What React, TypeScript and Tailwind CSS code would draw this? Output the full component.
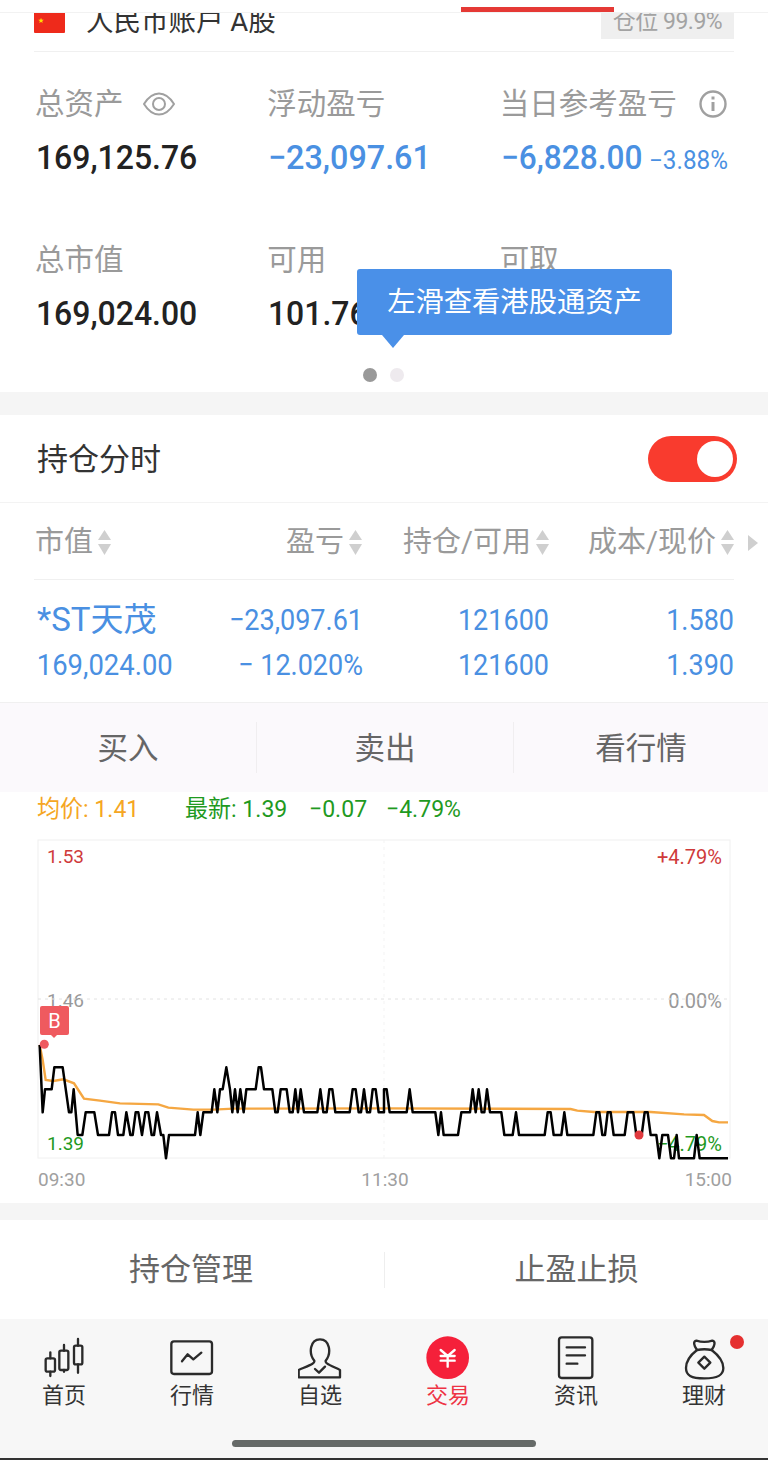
import React, { FC } from "react";

const font = { fontFamily: 'Roboto, "Noto Sans CJK SC", sans-serif' };

// chart points are measured at 3x, [x, y] pairs split by half of the page
const priceLeft = [119,195,128,397,135,328,155,328,163,262,188,262,207,397,214,397,221,328,233,465,247,465,257,397,283,397,294,465,327,465,336,397,345,397,354,465,370,465,379,397,391,465,398,465,407,397,415,397,426,465,436,397,445,397,455,465,462,465,471,397,483,465,490,465,498,535,507,465,585,465,593,397,601,465,610,397,635,397,643,328,652,397,660,328,668,328,679,262,690,328,697,397,705,328,713,397,721,328,731,397,739,328,767,328,776,262,783,262,792,328,817,328,826,397,833,397,842,328,860,328,869,397,878,397,886,328,894,397,902,328,912,397,952,397,961,328,970,397,980,397,988,328,997,328,1006,397,1049,397,1058,328,1067,328,1076,397,1083,397,1092,328,1101,397,1110,397,1118,328,1127,328,1136,397,1152,397];
const priceRight = [0,328,8,328,17,397,68,397,77,328,86,397,154,397,163,465,171,397,179,465,222,465,232,397,258,397,266,328,275,397,284,328,293,397,301,397,309,328,318,397,352,397,361,465,386,465,396,397,405,465,482,465,491,397,500,397,509,465,532,465,541,397,550,465,628,465,637,397,646,397,655,465,663,465,671,397,680,397,689,465,722,465,731,397,748,397,757,465,773,465,782,397,791,397,800,465,817,465,826,535,835,465,852,465,861,535,870,535,878,465,885,535,930,535,938,465,947,535,1032,535];
const avgLeft = [119,195,128,240,137,300,160,303,190,298,222,310,235,330,252,356,300,362,360,370,475,373,505,383,580,389,640,389,700,386,1152,385];
const avgRight = [0,385,560,387,580,392,630,396,800,396,900,403,960,405,985,423,1005,427,1032,427];

const toPoints = (left: number[], right: number[]) => {
  const out: string[] = [];
  for (let i = 0; i < left.length; i += 2) out.push(`${left[i] / 3},${980 + left[i + 1] / 3}`);
  for (let i = 0; i < right.length; i += 2) out.push(`${384 + right[i] / 3},${980 + right[i + 1] / 3}`);
  return out.join(" ");
};

const Stat: FC<{ label: string; children: React.ReactNode; icon?: React.ReactNode }> = ({ label, children, icon }) => (
  <div>
    <div className="flex h-[40px] items-center whitespace-nowrap text-[29.5px] text-[#9a9a9a]">
      {label}
      {icon}
    </div>
    <div className="mt-[8px] flex h-[40px] items-baseline whitespace-nowrap">{children}</div>
  </div>
);

const SortIcon = () => (
  <svg viewBox="0 0 15 26" className="ml-[4px] h-[26px] w-[15px] shrink-0" fill="#cfcfcf">
    <path d="M7.5 0 L14 10 H1 Z" />
    <path d="M7.5 25 L14 14 H1 Z" />
  </svg>
);

const HeadCell: FC<{ label: string; left?: boolean }> = ({ label, left }) => (
  <div className={left ? "flex items-center" : "flex items-center justify-end"}>
    {label}
    <SortIcon />
  </div>
);

const Tab: FC<{ label: string; red?: boolean; view: string; children: React.ReactNode }> = ({ label, red, view, children }) => (
  <div className="flex w-[128px] flex-col items-center">
    <svg viewBox={view} className="h-[44px] w-[44px]" fill="none" stroke="#2b2b2b" strokeWidth="7" strokeLinejoin="round" strokeLinecap="round">
      {children}
    </svg>
    <span className={red ? "mt-[3px] text-[22px] leading-[26px] text-[#ee3344]" : "mt-[3px] text-[22px] leading-[26px] text-[#333]"}>{label}</span>
  </div>
);

export default function App() {
  return (
    <div className="relative h-[1460px] w-[768px] overflow-hidden bg-white" style={font}>
      {/* top strip */}
      <div className="h-[13px] border-b border-[#f2f2f2] bg-white pl-[461px] pt-[7px]">
        <div className="h-[5px] w-[153px] bg-[#e53935]" />
      </div>

      <div className="mx-[34px] flex h-[39px] items-start justify-between overflow-hidden border-b border-[#f0f0f0]">
        <div className="flex items-start">
          <div className="flex h-[20px] w-[31px] items-start rounded-b-[1px] bg-[#ee2a1b] pl-[4px] pt-[3px] text-[6px] leading-[8px] text-[#ffde00]">★</div>
          <div className="-mt-[12px] ml-[21px] whitespace-nowrap text-[27.5px] leading-[42px] text-[#333]">人民币账户 A股</div>
        </div>
        <div className="flex h-[26px] w-[133px] items-start justify-center overflow-hidden bg-[#efefef] text-[23px] leading-[18px] tracking-[-0.5px] text-[#a3a3a3]">仓位 99.9%</div>
      </div>

      {/* assets */}
      <div className="relative h-[340px]">
        <div className="grid grid-cols-3 gap-y-[68px] pl-[35px] pr-[36px] pt-[32px]">
          <Stat
            label="总资产"
            icon={
              <svg viewBox="0 0 32 24" className="ml-[19px] h-[24px] w-[32px]" fill="none" stroke="#a0a0a0" strokeWidth="2">
                <path d="M1 12 C6 4 11 1.5 16 1.5 C21 1.5 26 4 31 12 C26 20 21 22.5 16 22.5 C11 22.5 6 20 1 12 Z" />
                <circle cx="16" cy="12" r="6" />
              </svg>
            }
          >
            <span className="inline-block origin-left scale-x-[.94] pl-[1px] text-[34px] font-medium text-[#222]">169,125.76</span>
          </Stat>
          <Stat label="浮动盈亏">
            <span className="inline-block origin-left scale-x-[.95] pl-[1px] text-[34px] font-medium text-[#4a90e2]">−23,097.61</span>
          </Stat>
          <Stat
            label="当日参考盈亏"
            icon={
              <svg viewBox="0 0 28 28" className="ml-[22px] h-[28px] w-[28px] shrink-0" fill="none" stroke="#a0a0a0" strokeWidth="2.4">
                <circle cx="14" cy="14" r="12.5" />
                <path d="M14 12 V21" strokeWidth="3" />
                <path d="M14 6.5 V9.5" strokeWidth="3" />
              </svg>
            }
          >
            <span className="inline-block w-[149px] origin-left scale-x-[.93] pl-[1px] text-[34px] font-medium text-[#4a90e2]">−6,828.00</span>
            <span className="inline-block origin-left scale-x-[.97] text-[25px] text-[#4a90e2]">−3.88%</span>
          </Stat>
          <Stat label="总市值">
            <span className="inline-block origin-left scale-x-[.94] pl-[1px] text-[34px] font-medium text-[#222]">169,024.00</span>
          </Stat>
          <Stat label="可用">
            <span className="inline-block origin-left scale-x-[.94] pl-[1px] text-[34px] font-medium text-[#222]">101.76</span>
          </Stat>
          <Stat label="可取">
            <span className="inline-block origin-left scale-x-[.94] pl-[1px] text-[34px] font-medium text-[#222]">0.00</span>
          </Stat>
        </div>

        <div className="absolute bottom-[10px] left-[363px] flex gap-[13px]">
          <div className="h-[14px] w-[14px] rounded-full bg-[#999]" />
          <div className="h-[14px] w-[14px] rounded-full bg-[#eeeaee]" />
        </div>

        {/* tooltip */}
        <div className="absolute left-[357px] top-[217px] flex h-[66px] w-[315px] items-center justify-center rounded-[3px] bg-[#4a90e8] pt-[3px] text-[28.3px] text-white">
          左滑查看港股通资产
          <div className="absolute left-[25px] top-[66px] h-0 w-0 border-x-[11px] border-t-[13px] border-x-transparent border-t-[#4a90e8]" />
        </div>
      </div>

      <div className="h-[23px] bg-[#f5f5f5]" />

      {/* toggle row */}
      <div className="flex h-[88px] items-center justify-between border-b border-[#f3f3f3] pl-[37px] pr-[31px]">
        <span className="pt-[4px] text-[31px] text-[#333]">持仓分时</span>
        <div className="flex h-[46px] w-[89px] items-center justify-end rounded-full bg-[#f93b2e] pr-[4px]">
          <div className="h-[36px] w-[36px] rounded-full bg-white" />
        </div>
      </div>

      {/* holdings table */}
      <div className="flex h-[76px] items-center pl-[35px] pt-[4px] text-[29px] text-[#9a9a9a]">
        <div className="grid w-[700px] grid-cols-[187px_141px_187px_185px]">
          <HeadCell label="市值" left />
          <HeadCell label="盈亏" />
          <HeadCell label="持仓/可用" />
          <HeadCell label="成本/现价" />
        </div>
        <svg viewBox="0 0 10 16" className="ml-[13px] h-[16px] w-[10px]" fill="#cfcfcf">
          <path d="M0 0 L10 8 L0 16 Z" />
        </svg>
      </div>
      <div className="mx-[34px] border-t border-[#f0f0f0]">
        <div className="grid h-[122px] grid-cols-[148px_181px_186px_185px] content-center gap-y-[5px] pt-[2px] text-[30px] leading-[40px] text-[#4a90e2]">
          <div className="whitespace-nowrap pl-[3px] text-[33px]">*ST天茂</div>
          <div className="origin-right scale-x-[.9] whitespace-nowrap text-right">−23,097.61</div>
          <div className="origin-right scale-x-[.9] text-right">121600</div>
          <div className="origin-right scale-x-[.9] text-right">1.580</div>
          <div className="origin-left scale-x-[.915] whitespace-nowrap pl-[3px]">169,024.00</div>
          <div className="origin-right scale-x-[.9] whitespace-nowrap text-right">− 12.020%</div>
          <div className="origin-right scale-x-[.9] text-right">121600</div>
          <div className="origin-right scale-x-[.9] text-right">1.390</div>
        </div>
      </div>

      {/* actions */}
      <div className="flex h-[90px] items-center border-t border-[#f0f0f0] bg-[#fbf9fc] text-[30.5px] text-[#666]">
        <div className="flex h-[51px] w-[257px] items-center justify-center border-r border-[#f0eef0] pt-[2px]">买入</div>
        <div className="flex h-[51px] w-[257px] items-center justify-center border-r border-[#f0eef0] pt-[2px]">卖出</div>
        <div className="flex h-[51px] flex-1 items-center justify-center pt-[2px]">看行情</div>
      </div>

      {/* intraday chart */}
      <div className="relative h-[411px]">
        <div className="flex h-[34px] items-center whitespace-nowrap pl-[37px] text-[24px] leading-[30px]">
          <span className="inline-block w-[148px] origin-left scale-x-[.96] text-[#f5a623]">均价: 1.41</span>
          <span className="inline-block w-[124px] origin-left scale-x-[.96] text-[#1f9a1f]">最新: 1.39</span>
          <span className="inline-block w-[77px] origin-left scale-x-[.96] text-[#1f9a1f]">−0.07</span>
          <span className="inline-block origin-left scale-x-[.96] text-[#1f9a1f]">−4.79%</span>
        </div>

        <span className="absolute left-[47px] top-[53px] text-[19px] leading-[24px] text-[#cf3a3a]">1.53</span>
        <span className="absolute right-[46px] top-[53px] text-[20px] leading-[24px] text-[#cf3a3a]">+4.79%</span>
        <span className="absolute left-[47px] top-[197px] text-[19px] leading-[24px] text-[#999]">1.46</span>
        <span className="absolute right-[46px] top-[197px] text-[20px] leading-[24px] text-[#999]">0.00%</span>
        <span className="absolute left-[47px] top-[340px] text-[19px] leading-[24px] text-[#1f9a1f]">1.39</span>
        <span className="absolute right-[46px] top-[340px] text-[20px] leading-[24px] text-[#1f9a1f]">−4.79%</span>

        <svg viewBox="0 792 768 411" className="absolute inset-0 h-[411px] w-[768px]" fill="none">
          <rect x="38" y="840" width="692" height="318" stroke="#f0f0f0" strokeWidth="1" />
          <path d="M38 999 H730" stroke="#e2e2e2" strokeWidth="1" strokeDasharray="3 4" />
          <path d="M384 840 V1158" stroke="#f3f3f3" strokeWidth="1" strokeDasharray="3 4" />
          <polyline points={toPoints(avgLeft, avgRight)} stroke="#f5a742" strokeWidth="2.4" />
          <polyline points={toPoints(priceLeft, priceRight)} stroke="#000" strokeWidth="2.5" strokeLinejoin="round" />
          <circle cx="44.3" cy="1044.3" r="4.5" fill="#ee5a5f" />
          <circle cx="639" cy="1135" r="4.5" fill="#e0393e" />
        </svg>

        <div className="absolute left-[40px] top-[214px] flex h-[29px] w-[29px] items-center justify-center rounded-[2px] bg-[#ef5a5f] text-[20px] text-white">
          B
          <div className="absolute left-[10px] top-[28px] h-0 w-0 border-x-[4px] border-t-[4px] border-x-transparent border-t-[#ef5a5f]" />
        </div>

        <div className="absolute left-[38px] right-[36px] top-[376px] flex justify-between text-[19px] leading-[24px] text-[#a0a0a0]">
          <span>09:30</span>
          <span>11:30</span>
          <span>15:00</span>
        </div>
      </div>

      <div className="h-[17px] bg-[#f5f5f5]" />

      {/* position management */}
      <div className="flex h-[99px] items-center text-[31px] text-[#666]">
        <div className="flex h-[36px] w-[385px] items-center justify-center border-r border-[#eeeeee] pr-[2px] pt-[2px]">持仓管理</div>
        <div className="flex-1 pt-[2px] text-center">止盈止损</div>
      </div>

      {/* tab bar */}
      <div className="relative h-[141px] bg-[#f7f7f7]">
        <div className="flex pt-[17px]">
          <Tab label="首页" view="126 48 132 132">
            <path d="M151 97 V115 M151 155 V168 M192 75 V92 M192 150 V155 M234 57 V77 M234 133 V158" />
            <rect x="137" y="115" width="28" height="40" rx="5" />
            <rect x="178" y="92" width="27" height="58" rx="5" />
            <rect x="222" y="77" width="25" height="56" rx="5" />
          </Tab>
          <Tab label="行情" view="510 48 132 132">
            <rect x="514" y="64" width="122" height="98" rx="8" />
            <polyline points="546,124 563,103 580,118 604,98" />
          </Tab>
          <Tab label="自选" view="894 48 132 132">
            <path d="M943 122 C925 100 930 58 960 58 C990 58 995 100 977 122 C975 130 985 133 1020 150 V172 H896 V150 C935 133 945 130 943 122 Z" />
            <polyline points="945,147 957,158 975,140" />
          </Tab>
          <Tab label="交易" red view="126 48 132 132">
            <circle cx="191" cy="113" r="64" fill="#f5203a" stroke="none" />
            <path d="M170 90 L191 108 L212 90 M170 108 H212 M170 122 H212 M191 108 V140" stroke="#fff" />
          </Tab>
          <Tab label="资讯" view="510 48 132 132">
            <rect x="525" y="52" width="100" height="122" rx="8" />
            <path d="M548 82 H603 M548 106 H603 M548 131 H580" />
          </Tab>
          <Tab label="理财" view="891 48 132 132">
            <path d="M936 90 C918 104 903 122 903 144 C903 166 918 175 958 175 C998 175 1015 166 1015 144 C1015 122 998 104 980 90" />
            <path d="M936 90 C926 76 924 64 934 62 C950 67 966 67 982 62 C992 64 990 76 980 90 C966 87 950 87 936 90 Z" />
            <path d="M958 110 L976 128 L958 146 L940 128 Z" />
          </Tab>
        </div>
        <div className="absolute left-[730px] top-[16px] h-[14px] w-[14px] rounded-full bg-[#e53030]" />
        <div className="absolute bottom-[13px] left-[232px] h-[7px] w-[304px] rounded-full bg-[#666a68]" />
        <div className="absolute bottom-0 left-0 h-[2px] w-full bg-[#333]" />
      </div>
    </div>
  );
}
